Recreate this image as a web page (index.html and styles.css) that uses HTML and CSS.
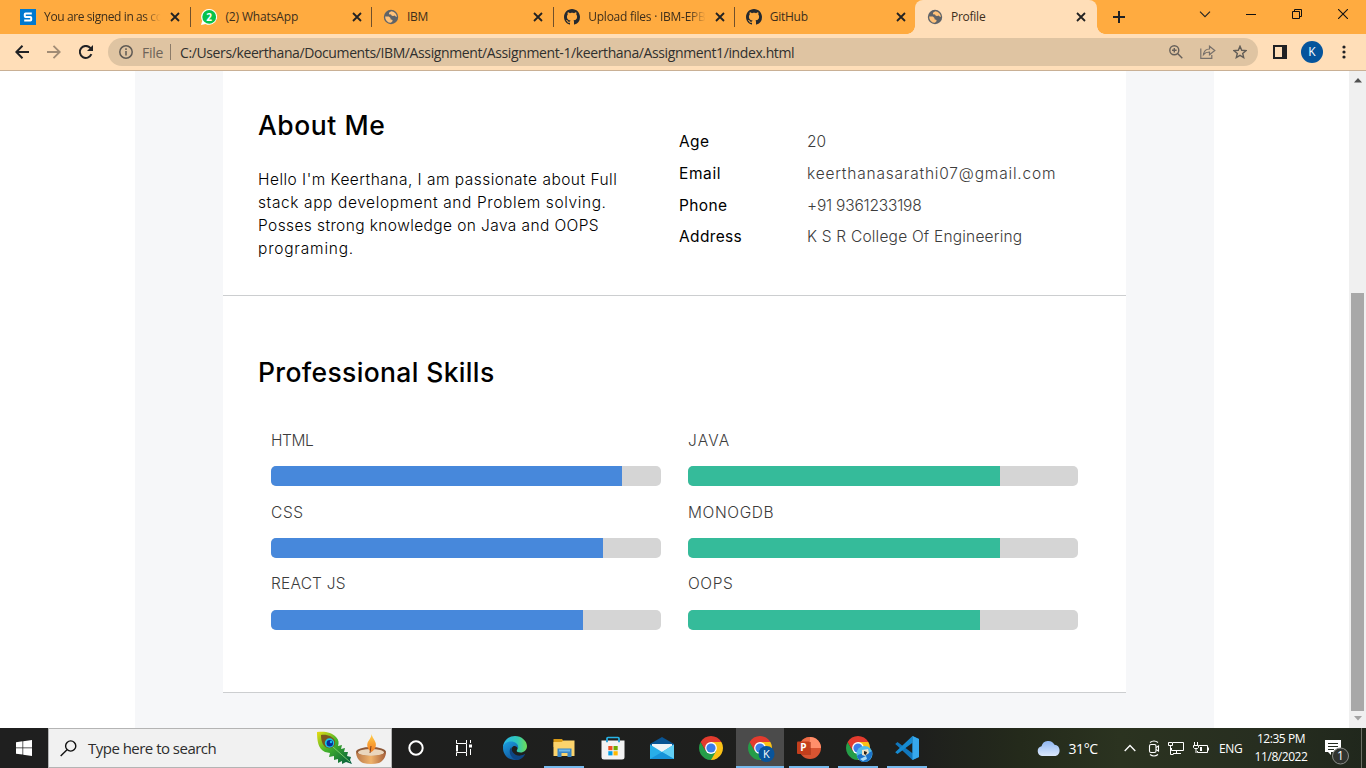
FILE: index.html
```html
<!DOCTYPE html>
<html lang="en">
<head>
<meta charset="utf-8">
<title>Profile</title>
<link rel="stylesheet" href="styles.css">
</head>
<body>
<svg class="defs" width="0" height="0" aria-hidden="true">
  <symbol id="close" viewBox="0 0 16 16"><path d="M4 4l8 8M12 4l-8 8" stroke="#222" stroke-width="1.8" fill="none"/></symbol>
  <symbol id="globe" viewBox="0 0 16 16"><circle cx="8" cy="8" r="7.2" fill="#5f6368"/><path d="M8.200 2.300 6 3.800v1.500l2 .2.800 1.200 1.500.4 1.200-.6 1.500 1.200.9.200A6 6 0 0 0 8.200 2.300zM2.100 7.600h3.700l1.700 1.500v1.200l2 .6v1.300l-1.600 1.600A6 6 0 0 1 2.100 7.600z" fill="#ffc27a"/></symbol>
  <symbol id="github" viewBox="0 0 16 16"><path fill="#24292f" d="M8 0C3.580 0 0 3.580 0 8c0 3.540 2.290 6.530 5.470 7.590.4.070.55-.17.55-.38 0-.19-.01-.82-.01-1.490-2.010.37-2.530-.49-2.690-.94-.09-.23-.48-.94-.82-1.130-.28-.15-.68-.52-.01-.53.63-.01 1.080.58 1.230.82.72 1.210 1.870.87 2.330.66.07-.52.28-.87.51-1.070-1.780-.2-3.640-.89-3.640-3.950 0-.87.31-1.590.82-2.150-.08-.2-.36-1.020.08-2.120 0 0 .67-.21 2.200.82.64-.18 1.320-.27 2-.27s1.360.09 2 .27c1.530-1.040 2.200-.82 2.200-.82.44 1.100.16 1.920.08 2.120.51.56.82 1.270.82 2.150 0 3.070-1.870 3.750-3.650 3.950.29.25.54.73.54 1.480 0 1.070-.01 1.930-.01 2.200 0 .21.15.46.55.38A8.010 8.010 0 0 0 16 8c0-4.420-3.580-8-8-8z"/></symbol>
  <symbol id="chrome" viewBox="0 0 24 24">
    <path d="M12 12V6h10.390A12 12 0 0 1 12 24z" fill="#fbc116"/>
    <path d="M12 12l5.200 3L12 24A12 12 0 0 1 1.610 6l5.200 9z" fill="#259d48"/>
    <path d="M1.610 6 6.800 15 12 6h10.390A12 12 0 0 0 1.610 6z" fill="#e33b2e"/>
    <circle cx="12" cy="12" r="5.900" fill="#fff"/><circle cx="12" cy="12" r="4.600" fill="#3b7de9"/>
  </symbol>
</svg>

<header class="browser">
  <div class="tabs">
    <div class="tab">
      <svg class="fav" viewBox="0 0 16 16"><path d="M0 0h16v16H0z" fill="#0079d0"/><path d="M11.800 4.600H5.500Q4.800 4.600 4.800 5.300v1.900q0 .8.8.8h4.800q.8 0 .8.800v1.900q0 .7-.7.700H4.200" fill="none" stroke="#fff" stroke-width="2"/></svg>
      <span class="title fade t1">You are signed in as co</span><svg class="x"><use href="#close"/></svg>
    </div>
    <div class="tab">
      <svg class="fav" viewBox="0 0 16 16"><path d="M8.200 0a7.900 7.900 0 1 1-3.700 14.900L0 16l1.200-4.200A7.900 7.900 0 0 1 8.200 0z" fill="#fff"/><circle cx="8.200" cy="7.900" r="6.900" fill="#08c24b"/><text class="badge-text" x="8.200" y="11.800" text-anchor="middle">2</text></svg>
      <span class="title t2">(2) WhatsApp</span><svg class="x"><use href="#close"/></svg>
    </div>
    <div class="tab">
      <svg class="fav"><use href="#globe"/></svg>
      <span class="title t3">IBM</span><svg class="x"><use href="#close"/></svg>
    </div>
    <div class="tab">
      <svg class="fav"><use href="#github"/></svg>
      <span class="title fade t4">Upload files · IBM-EPB</span><svg class="x"><use href="#close"/></svg>
    </div>
    <div class="tab last">
      <svg class="fav"><use href="#github"/></svg>
      <span class="title t5">GitHub</span><svg class="x"><use href="#close"/></svg>
    </div>
    <div class="tab active">
      <svg class="fav"><use href="#globe"/></svg>
      <span class="title t6">Profile</span><svg class="x"><use href="#close"/></svg>
    </div>
    <svg class="plus" viewBox="0 0 12 12"><path d="M6 0v12M0 6h12" stroke="#202124" stroke-width="2"/></svg>
    <div class="window">
      <svg width="12" height="7" viewBox="0 0 12 7"><path d="M1 .7l5 5 5-5" fill="none" stroke="#222" stroke-width="1.100"/></svg>
      <svg width="10" height="10" viewBox="0 0 10 10"><path d="M0 5.500h10" stroke="#111"/></svg>
      <svg width="10" height="10" viewBox="0 0 10 10"><path d="M.5 2.500h7v7h-7zM2.500 2.500v-2h7v7h-2" fill="none" stroke="#111"/></svg>
      <svg width="10" height="10" viewBox="0 0 10 10"><path d="M0 0l10 10M10 0L0 10" stroke="#111" stroke-width="1.100"/></svg>
    </div>
  </div>
  <div class="toolbar">
    <svg width="14" height="14" viewBox="0 0 14 14"><path d="M14 7H1.500M7.500 .8 1.300 7l6.200 6.200" fill="none" stroke="#202124" stroke-width="2"/></svg>
    <svg width="14" height="14" viewBox="0 0 14 14"><path d="M0 7h12.500M6.500 .8 12.700 7l-6.200 6.200" fill="none" stroke="#a18c75" stroke-width="1.800"/></svg>
    <svg width="14" height="14" viewBox="0 0 14 14"><path d="M12.400 9.200A6 6 0 1 1 11.300 2.900L12.500 4.200" fill="none" stroke="#202124" stroke-width="2"/><path d="M14 0v6H8z" fill="#202124"/></svg>
    <div class="address">
      <svg width="14" height="14" viewBox="0 0 14 14"><circle cx="7" cy="7" r="6.200" fill="none" stroke="#5f5a54" stroke-width="1.500"/><path d="M7 6v4.500M7 3.300v1.600" stroke="#5f5a54" stroke-width="1.500"/></svg>
      <span class="file">File</span><i class="bar"></i>
      <span class="url">C:/Users/keerthana/Documents/IBM/Assignment/Assignment-1/keerthana/Assignment1/index.html</span>
      <div class="actions">
        <svg width="14" height="14" viewBox="0 0 14 14"><g fill="none" stroke="#66605a" stroke-width="1.400"><circle cx="5.300" cy="5.300" r="4.500"/><path d="M8.600 8.600l4.700 4.700M3 5.300h4.600M5.300 3v4.600"/></g></svg>
        <svg width="16" height="14" viewBox="0 0 16 14"><path d="M.8 3.500v9.800h11V10M3.500 9.500C4 6 6 4 9.500 4V1.200L14.800 5.500 9.500 9.700V7C7 7 5 7.700 3.500 9.500z" fill="none" stroke="#77706a" stroke-width="1.200"/></svg>
        <svg width="14" height="14" viewBox="0 0 14 14"><path d="M7 1.300l1.700 4 4.300.3-3.300 2.800 1 4.200L7 10.400l-3.700 2.200 1-4.200L1 5.600l4.300-.3z" fill="none" stroke="#625d57" stroke-width="1.400"/></svg>
      </div>
    </div>
    <div class="tools">
      <svg width="14" height="14" viewBox="0 0 14 14"><path d="M1 1h12v12H1z" fill="none" stroke="#202124" stroke-width="2"/><path d="M9 1h4v12H9z" fill="#202124"/></svg>
      <span class="avatar">K</span>
      <svg width="4" height="14" viewBox="0 0 4 14" fill="#202124"><circle cx="2" cy="2" r="1.600"/><circle cx="2" cy="7" r="1.600"/><circle cx="2" cy="12" r="1.600"/></svg>
    </div>
  </div>
</header>

<div class="viewport">
  <main class="page">
    <div class="card">
      <section class="about">
        <div class="bio">
          <h2 class="h-about">About Me</h2>
          <p><span class="l1">Hello I'm Keerthana, I am passionate about Full</span><br><span class="l2">stack app development and Problem solving.</span><br><span class="l3">Posses strong knowledge on Java and OOPS</span><br><span class="l4">programing.</span></p>
        </div>
        <dl class="facts">
          <dt class="d1">Age</dt><dd class="v1">20</dd>
          <dt class="d2">Email</dt><dd class="v2">keerthanasarathi07@gmail.com</dd>
          <dt class="d3">Phone</dt><dd class="v3">+91 9361233198</dd>
          <dt class="d4">Address</dt><dd class="v4">K S R College Of Engineering</dd>
        </dl>
      </section>
      <section class="skills">
        <h2 class="h-skills">Professional Skills</h2>
        <div class="grid">
          <div class="skill"><span class="s1">HTML</span><div class="track"><div class="fill blue" style="width:90%"></div></div></div>
          <div class="skill"><span class="s2">JAVA</span><div class="track"><div class="fill green" style="width:80%"></div></div></div>
          <div class="skill"><span class="s3">CSS</span><div class="track"><div class="fill blue" style="width:85%"></div></div></div>
          <div class="skill"><span class="s4">MONOGDB</span><div class="track"><div class="fill green" style="width:80%"></div></div></div>
          <div class="skill"><span class="s5">REACT JS</span><div class="track"><div class="fill blue" style="width:80%"></div></div></div>
          <div class="skill"><span class="s6">OOPS</span><div class="track"><div class="fill green" style="width:74.9%"></div></div></div>
        </div>
      </section>
    </div>
  </main>
  <div class="scrollbar">
    <svg width="8" height="5" viewBox="0 0 8 5"><path d="M4 0l4 4.500H0z" fill="#505050"/></svg>
    <div class="thumb"></div>
    <svg width="8" height="5" viewBox="0 0 8 5"><path d="M4 4.500L0 0h8z" fill="#a3a3a3"/></svg>
  </div>
</div>

<footer class="taskbar">
  <div class="start"><svg width="16" height="16" viewBox="0 0 16 16"><path d="M0 2.200 6.500 1.300v6.200H0zM7.200 1.200 16 0v7.500H7.200zM0 8.300h6.500v6.300L0 13.700zM7.200 8.300H16V16l-8.800-1.200z" fill="#fff"/></svg></div>
  <div class="search">
    <svg width="17" height="17" viewBox="0 0 17 17"><circle cx="10.700" cy="6" r="5.100" fill="none" stroke="#111" stroke-width="1.400"/><path d="M7 9.700.7 16" stroke="#111" stroke-width="1.400"/></svg>
    <span class="prompt">Type here to search</span>
    <svg class="diwali" width="72" height="34" viewBox="0 0 72 34">
      <defs>
        <linearGradient id="feather" x1="0" y1="0" x2="1" y2="1"><stop offset="0" stop-color="#eddc12"/><stop offset=".4" stop-color="#46b52b"/><stop offset="1" stop-color="#00583f"/></linearGradient>
        <linearGradient id="bowl" x1="0" x2="1"><stop offset="0" stop-color="#b97849"/><stop offset=".5" stop-color="#efb36c"/><stop offset="1" stop-color="#a65e38"/></linearGradient>
        <linearGradient id="flame" y2="1" x2="0"><stop offset="0" stop-color="#ffd04a"/><stop offset="1" stop-color="#f47b20"/></linearGradient>
      </defs>
      <path d="M1 1c7-1 15 0 19 5 3 3 3 6 2 9l4-1-1 4 4-1-1 4 4 0-1 4 4 1-1 3 2 4-6-2-4 2 0-3-4 2 0-4-4 1 0-4-5 1 1-4-5-1C2 18 1 9 1 1z" fill="url(#feather)"/>
      <path d="M17 16l17 15" stroke="#8fda77" stroke-width=".8"/>
      <path d="M5 4c5-1 12 1 14 6 1 5-3 8-7 7C7 16 5 10 5 4z" fill="#7b571d"/>
      <circle cx="13.500" cy="12" r="4.700" fill="#17c5e4"/><circle cx="13.800" cy="12.300" r="3.200" fill="#062b9b"/><circle cx="15" cy="11" r="1.200" fill="#19bfe8"/>
      <ellipse cx="55" cy="21" rx="15" ry="5" fill="#8e5837"/><ellipse cx="55" cy="21.500" rx="13" ry="3.500" fill="#ead6bd"/>
      <path d="M40 21c5 5 25 5 30 0 0 5-3 9-7 11q-8 2-16 0c-4-2-7-6-7-11z" fill="url(#bowl)"/>
      <path d="M55.500 3c1 5 6 8 4 13-1 3-3 4-4 5-3-2-5-5-4-9 1-3 4-5 4-9z" fill="url(#flame)"/><path d="M55 15l-1 7" stroke="#84431c"/>
    </svg>
  </div>
  <div class="app"><svg width="16" height="16" viewBox="0 0 16 16"><circle cx="8" cy="8" r="6.700" fill="none" stroke="#fff" stroke-width="2"/></svg></div>
  <div class="app view"><svg width="16" height="16" viewBox="0 0 16 16"><path d="M.5 0v3.500h10V0M.5 16v-3.500h10V16M.5 5v6.500M10.500 4v8M1.500 5v6.500M14.500 0v3M14.500 9v6" fill="none" stroke="#fff"/><path d="M13 4.500h3v3h-3z" fill="#fff"/></svg></div>
  <div class="apps">
    <div class="app"><svg width="24" height="24" viewBox="0 0 24 24">
      <defs><linearGradient id="edge-a"><stop offset="0" stop-color="#28b5eb"/><stop offset=".6" stop-color="#31c8b7"/><stop offset="1" stop-color="#6fdc55"/></linearGradient><linearGradient id="edge-b" x2=".7" y2="1"><stop offset="0" stop-color="#1ba0e2"/><stop offset="1" stop-color="#104c94"/></linearGradient></defs>
      <path d="M0 12C0 5 5.400 0 12 0s12 5 12 10c0 4-3 6.500-6.500 6.500-3 0-4.500-1-3.500-2.500 2-3 0-7-5-7S0 10 0 12z" fill="url(#edge-a)"/>
      <path d="M0 12c0-4 4-6.500 8-6.500 5 0 8 3.500 7 7-1-2-3-3-5-2-4 3 0 10 6 9.500 3 0 5-1.500 6-2C20 22 16 24 12 24 5 24 0 18.500 0 12z" fill="url(#edge-b)"/>
      <path d="M8.500 11c-4 4-1 11 5 13 4 0 7-3 8.500-6-3 2-8 2.500-11-.5-2-2-3-4-2.500-6.500z" fill="#0e4583"/></svg></div>
    <div class="app open"><svg width="22" height="18" viewBox="0 0 22 18"><path d="M.5 0H9l1.500 2H21v6H.5z" fill="#d99a16"/><path d="M.5 3h8l2-1.500H21.500V17H.5z" fill="#fbd36c"/><path d="M4.500 9.500h14V18h-4v-4h-6v4h-4z" fill="#3986c6"/><path d="M6 10.500h11v2H6z" fill="#70b9e8"/></svg></div>
    <div class="app"><svg width="24" height="24" viewBox="0 0 24 24"><path d="M6 6V2.500Q6 1.500 7 1.500h10q1 0 1 1V6" fill="none" stroke="#27b4e8" stroke-width="1.700"/><path d="M.5 4.500h23V21q0 2.500-2.500 2.500H3Q.5 23.500.5 21z" fill="#f3f3f3"/><path d="M6 4v2.300M18 4v2.300" stroke="#1597d1" stroke-width="1.700"/><path d="M7.300 10h4.200v4.200H7.300z" fill="#f04e23"/><path d="M12.500 10h4.200v4.200h-4.200z" fill="#70ac00"/><path d="M7.300 15.200h4.200v4.200H7.300z" fill="#00a0e8"/><path d="M12.500 15.200h4.200v4.200h-4.200z" fill="#ffb900"/></svg></div>
    <div class="app"><svg width="24" height="24" viewBox="0 0 24 24"><path d="M0 8 12 1l12 7v5H0z" fill="#095493"/><path d="M2 8h20v6l-10 4L2 13z" fill="#f0f4f7"/><path d="M0 8.500 12 16l12-7.500V23H0z" fill="#28aee8"/><path d="M24 8.500V23L12 16z" fill="#62cff4"/><path d="M0 23l12-7 12 7z" fill="#1793d9"/></svg></div>
    <div class="app"><svg width="24" height="24"><use href="#chrome"/></svg></div>
    <div class="app open current"><svg class="badged" width="27" height="26" viewBox="0 0 27 26"><svg width="24" height="24"><use href="#chrome"/></svg><circle cx="18.500" cy="18" r="8" fill="#08549b"/><text class="mini-k" x="18.300" y="22" text-anchor="middle">K</text></svg></div>
    <div class="app open"><svg width="24" height="24" viewBox="0 0 24 24"><circle cx="13" cy="12" r="11" fill="#d85431"/><path d="M13 1a11 11 0 0 1 11 11H13z" fill="#ff8f6b"/><path d="M2.500 9A11 11 0 0 1 13 1v11H2.500z" fill="#ed6c47"/><path d="M2 6h12v13H4z" fill="#a83519" opacity=".6"/><rect y="5.500" width="12.500" height="12.500" rx="1" fill="#c43e1c"/><text class="ppt" x="6.300" y="15.300" text-anchor="middle">P</text></svg></div>
    <div class="app open"><svg class="badged" width="27" height="26" viewBox="0 0 27 26"><svg width="24" height="24"><use href="#chrome"/></svg><circle cx="18.500" cy="18" r="8" fill="#51bde9"/><path d="M11 20c3-3 6-2 8-1l7-4c1 4-1 9-5 10.500-5 1.500-9-1.500-10-5.500z" fill="#1c73ca"/><path d="M16 14l6-1 1 4-4 3-3-1z" fill="#eee0c4"/><path d="M18 15l3 1-1 3-2-1z" fill="#29231c"/><path d="M14 23l6-3 1 3-4 2z" fill="#a9dcf8"/></svg></div>
    <div class="app open"><svg width="24" height="24" viewBox="0 0 24 24"><path d="M17.500 0 24 3v18l-6.500 3L2 9.500 .2 7.900 2.500 6 17.500 17.200z" fill="#1177bd"/><path d="M17.500 24V6.800L2.500 18 .2 16.200 17.500 0z" fill="#168bd2"/><path d="M17.500 0 24 3v18l-6.500 3z" fill="#36a8ed"/></svg></div>
  </div>
  <div class="tray">
    <svg class="cloud" width="24" height="16" viewBox="0 0 24 16"><defs><linearGradient id="sky" x2="0" y2="1"><stop offset="0" stop-color="#8eb5f1"/><stop offset="1" stop-color="#dce9fc"/></linearGradient></defs><path d="M5 16a5 5 0 0 1-.5-9.800A7 7 0 0 1 17.500 4.700 5.800 5.800 0 0 1 18.500 16z" fill="url(#sky)"/></svg>
    <span class="temp">31°C</span>
    <svg class="chev" width="12" height="8" viewBox="0 0 12 8"><path d="M.7 7 6 1.500 11.300 7" fill="none" stroke="#fff" stroke-width="1.300"/></svg>
    <svg width="12" height="17" viewBox="0 0 12 17"><g fill="none" stroke="#fff" stroke-width="1.100"><rect x="1.500" y="4.500" width="6.500" height="8" rx="1.500"/><path d="M8 7.500 10.500 6v5L8 9.500M2 2.500Q6-.5 10 2.500M2 14.500Q6 17.500 10 14.500"/></g></svg>
    <svg width="16" height="15" viewBox="0 0 16 15"><g fill="none" stroke="#fff"><path d="M5 1.500h10.500v8H3.500V7M8.500 9.500v3M5 12.500h8"/><path d="M.5 1.500h4v3h-4zM2.500 4.500v9h3"/></g></svg>
    <svg width="16" height="13" viewBox="0 0 16 13"><g fill="none" stroke="#fff"><path d="M6 3.500h8.500v7h-10V9M15.500 5.500v3M1.500 0v3M4.500 0v3M.5 3.500h5v2l-1 1h-3l-1-1zM3 7v4"/></g><path d="M7 5h2v4H7z" fill="#fff"/></svg>
    <span class="lang">ENG</span>
    <div class="clock"><span class="time">12:35 PM</span><span class="date">11/8/2022</span></div>
    <svg class="note" width="25" height="25" viewBox="0 0 25 25"><path d="M0 0h16v12H6v3l-3-3H0z" fill="#fff"/><path d="M3 3.500h10M3 6.500h10M3 9.500h6" stroke="#242b20"/><circle cx="15.500" cy="16" r="8" fill="#30332f" stroke="#8c8e8a"/><text class="count" x="15.500" y="20" text-anchor="middle">1</text></svg>
    <i class="peek"></i>
  </div>
</footer>
</body>
</html>
```
FILE: styles.css
```css
* { box-sizing: border-box; }
body {
  margin: 0;
  width: 1366px;
  height: 768px;
  overflow: hidden;
  display: flex;
  flex-direction: column;
  font-family: "Open Sans", "Noto Sans", sans-serif;
  background: #fff;
}
svg { display: block; flex: none; }
span { white-space: nowrap; }
.defs { position: absolute; }

/* Browser chrome */
.browser { height: 71px; background: #ffdeb8; border-bottom: 1px solid #c9b095; }
.tabs { height: 34px; display: flex; align-items: center; padding-left: 9.500px; background: #ffab40; }
.tab {
  width: 181.400px;
  height: 34px;
  display: flex;
  align-items: center;
  padding: 0 7.500px 0 10.600px;
  font-size: 12px;
  color: #3d2e1b;
  background: linear-gradient(#70502b, #70502b) right 7px / 1px 20px no-repeat;
}
.tab.last { background: none; }
.tab.active {
  position: relative;
  background: #ffdeb8;
  border-radius: 8px 8px 0 0;
  width: 182px;
  margin-left: -1.500px;
  padding: 0 8px 0 12px;
}
.tab.active::before, .tab.active::after {
  content: "";
  position: absolute;
  bottom: 0;
  width: 8px;
  height: 8px;
}
.tab.active::before { left: -8px; background: radial-gradient(circle at 0 0, transparent 7.500px, #ffdeb8 8px); }
.tab.active::after { right: -8px; background: radial-gradient(circle at 100% 0, transparent 7.500px, #ffdeb8 8px); }
.fav { width: 16px; height: 16px; margin-right: 8px; }
.title { flex: 1; line-height: 20px; }
.title.fade { -webkit-mask-image: linear-gradient(90deg, #000 84%, transparent 98%); mask-image: linear-gradient(90deg, #000 84%, transparent 98%); }
.t1 { letter-spacing: -.4px; }
.t2 { letter-spacing: -.15px; }
.t3, .t4, .t5, .t6 { letter-spacing: -.25px; }
.x { width: 16px; height: 16px; margin-left: 4px; }
.badge-text { font: bold 10px "Open Sans", sans-serif; fill: #fff; }
.plus { width: 12px; height: 12px; margin-left: 16px; }
.window { flex: 1; display: flex; align-items: center; justify-content: flex-end; gap: 36px; padding: 0 18px 6px 0; }
.window svg:first-child { margin-right: -1px; }

.toolbar { height: 36px; display: flex; align-items: center; padding-left: 15px; gap: 18px; }
.address {
  width: 1150px;
  height: 28px;
  margin-left: -3px;
  padding: 0 11px;
  display: flex;
  align-items: center;
  border-radius: 14px;
  background: #dfc4a2;
  font-size: 14px;
}
.file { margin-left: 9px; width: 28px; color: #6e6358; letter-spacing: -.3px; }
.bar { width: 1px; height: 16px; background: #8b7b69; }
.url { margin-left: 9px; color: #30302e; letter-spacing: -.385px; }
.actions { margin-left: auto; display: flex; gap: 17px; }
.tools { display: flex; align-items: center; gap: 14px; margin-left: -3px; }
.avatar {
  width: 22px;
  height: 22px;
  border-radius: 50%;
  background: #05549c;
  color: #fff;
  font-size: 12px;
  line-height: 22px;
  text-align: center;
}
.tools svg:last-child { margin-left: 5px; }

/* Profile page */
.viewport { flex: 1; display: flex; }
.page { width: 1079px; margin-left: 135px; padding: 0 88px; background: #f6f7f9; }
.card { background: #fff; height: 622px; font-family: Inter, "Open Sans", sans-serif; font-size: 15.500px; }
.card h2 { margin: 0; font-size: 26.500px; font-weight: 450; line-height: 38px; padding-bottom: 2px; color: #000; }
.card .h-about { letter-spacing: .55px; }
.card .h-skills { letter-spacing: .35px; }
.about { height: 225px; display: flex; padding: 35px 35px 0; border-bottom: 1px solid #ccced0; }
.bio { width: 421px; }
.bio p { margin: 22px 0 0; line-height: 23px; color: #000; font-weight: 350; }
.l1 { letter-spacing: .48px; }
.l2 { letter-spacing: .6px; }
.l3 { letter-spacing: .4px; }
.l4 { letter-spacing: .8px; }
.facts { margin: 20px 0 0; display: grid; grid-template-columns: 128px 1fr; grid-auto-rows: 31.800px; line-height: 32px; height: 128px; }
.facts dt { color: #000; letter-spacing: .35px; }
.facts .d2 { letter-spacing: .6px; }
.facts dd { margin: 0; color: #3c3c3c; font-weight: 300; white-space: nowrap; }
.v2 { letter-spacing: .8px; }
.v3 { letter-spacing: -.2px; }
.v4 { letter-spacing: .2px; }
.skills { height: 397px; padding: 57px 35px 0; border-bottom: 1px solid #ccced0; }
.grid { display: grid; grid-template-columns: 390px 390px; column-gap: 27px; grid-auto-rows: 71.700px; padding: 36px 13px 0; }
.skill { color: #3c3c3c; font-weight: 300; }
.skill span { display: block; line-height: 24px; margin-bottom: 13.200px; }
.s1 { letter-spacing: -.4px; }
.s2 { letter-spacing: 1.200px; }
.s3 { letter-spacing: .6px; }
.s4 { letter-spacing: .6px; }
.s5 { letter-spacing: .2px; }
.s6 { letter-spacing: .6px; }
.track { height: 20.300px; border-radius: 5px; overflow: hidden; background: #d5d5d5; }
.fill { height: 100%; }
.blue { background: #4788db; }
.green { background: #35bb9a; }

.scrollbar { width: 17px; margin-left: auto; background: #f0f0f0; display: flex; flex-direction: column; align-items: center; padding: 7px 0 6px; }
.thumb { width: 13px; height: 418px; margin: 210px 0 5px; background: #a8a8a8; }

/* Taskbar */
.taskbar { height: 40px; display: flex; background: linear-gradient(90deg, #1f1f1f 0, #1e1f1d 920px, #242a1b 1020px, #2b3320 1120px, #272e20 1260px, #20271c); color: #fff; }
.start { width: 48px; display: flex; align-items: center; justify-content: center; }
.search { width: 344px; background: #f1f1f1; border: 1px solid #b4b4b4; display: flex; align-items: center; padding-left: 11px; }
.prompt { margin-left: 11px; font-size: 15px; color: #2d2d2d; letter-spacing: -.52px; }
.diwali { margin-left: auto; margin-right: 3px; }
.app { width: 48px; display: flex; align-items: center; justify-content: center; }
.apps { display: flex; gap: 1px; margin-left: 3px; }
.badged { margin: 2px 0 0 3px; }
.open { background: linear-gradient(#76b9ed, #76b9ed) 4px bottom / 40px 2px no-repeat; }
.open.current { background: linear-gradient(#76b9ed, #76b9ed) 0 bottom / 48px 2px no-repeat, #4b4b4b; }
.mini-k { font: 11px "Open Sans", sans-serif; fill: #fff; }
.ppt { font: bold 10px "Open Sans", sans-serif; fill: #fff; }
.tray { margin-left: auto; display: flex; align-items: center; font-size: 13px; padding-right: 4px; }
.temp { width: 30px; margin: 0 25px 0 8px; font-size: 14px; letter-spacing: -.4px; }
.chev { margin-right: 12px; }
.chev ~ svg:not(.note) { margin-right: 8.500px; }
.chev + svg { margin-right: 10px; }
.lang { margin-left: 2px; width: 24px; font-size: 12px; letter-spacing: -.3px; }
.clock { width: 54px; margin-left: 11px; display: flex; flex-direction: column; align-items: center; font-size: 12px; line-height: 18px; }
.clock span { letter-spacing: -.45px; }
.note { margin: 8px 11px 0 17px; }
.count { font: 12px "Open Sans", sans-serif; fill: #fff; }
.peek { width: 1px; height: 40px; background: #6c7066; }
```
